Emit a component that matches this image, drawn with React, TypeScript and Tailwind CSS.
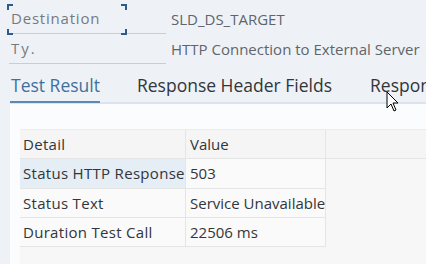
import React from "react";

const font = { fontFamily: '"Open Sans", "Noto Sans", sans-serif' };

function Corner({ pos }: { pos: string }) {
  return <span className={`absolute w-[6px] h-[6px] border-[#2f5b8a] ${pos}`} />;
}

export default function App() {
  return (
    <div className="w-[426px] h-[264px] overflow-hidden bg-[#eef2f7] relative" style={font}>
      <div className="pl-[9px] pt-[4px]">
        <div className="flex items-end h-[30px]">
          <div className="relative w-[157px] h-[30px] border-b border-[#c9ced4] flex items-center">
            <div className="absolute left-[-2px] top-0 w-[120px] h-[31px]">
              <Corner pos="left-0 top-0 border-l-2 border-t-2" />
              <Corner pos="right-0 top-0 border-r-2 border-t-2" />
              <Corner pos="left-0 bottom-0 border-l-2 border-b-2" />
              <Corner pos="right-0 bottom-0 border-r-2 border-b-2" />
            </div>
            <span className="pl-[2px] text-[15px] tracking-[0.8px] text-[#767a7e]">Destination</span>
          </div>
          <div className="pl-[5px] h-[30px] flex items-center text-[15px] text-[#5e656c]">SLD_DS_TARGET</div>
        </div>
        <div className="flex items-end h-[30px]">
          <div className="w-[157px] h-[30px] border-b border-[#c9ced4] flex items-center">
            <span className="pl-[2px] text-[15px] text-[#767a7e] tracking-[2px]">Ty.</span>
          </div>
          <div className="pl-[5px] h-[30px] flex items-center text-[15px] text-[#5e656c] whitespace-nowrap">
            HTTP Connection to External Server
          </div>
        </div>
      </div>
      <div className="ml-[10px] mt-[5px] flex h-[35px] border-b-2 border-[#dbe4ee] whitespace-nowrap">
        <div className="relative w-[91px] flex items-center text-[17.5px] text-[#41709c]">
          <span className="pl-[1px]">Test Result</span>
          <span className="absolute left-0 right-0 bottom-[-1px] h-[2px] bg-[#5d8ab4]" />
        </div>
        <div className="pl-[37px] flex items-center text-[17.5px] text-[#32363a]">Response Header Fields</div>
        <div className="pl-[38px] flex items-center text-[17.5px] text-[#32363a]">Response Body</div>
      </div>
      <div className="ml-[10px] h-[200px] bg-[#fbfcfd] pl-[10px] pt-[25px]">
        <div className="bg-[#f7f7f7] h-[200px] text-[15px] text-[#32363a]">
          <div className="grid grid-cols-[166px_140px_1fr] border-t border-[#ececec]">
            <div className="h-[29px] flex items-center pl-[3px] bg-[#f5f5f5] border-r border-b border-[#e5e5e5] tracking-[0.3px]">Detail</div>
            <div className="h-[29px] flex items-center pl-[4px] bg-[#f5f5f5] border-r border-b border-[#e5e5e5]">Value</div>
            <div className="h-[29px] bg-[#f5f5f5] border-b border-[#e5e5e5]" />
            <div className="h-[30px] flex items-center pl-[3px] bg-[#e5edf5] border-r border-b border-[#e5e5e5] whitespace-nowrap tracking-[0.3px]">Status HTTP Response</div>
            <div className="h-[30px] flex items-center pl-[4px] bg-[#fafafa] border-r border-b border-[#e5e5e5]">503</div>
            <div className="h-[30px]" />
            <div className="h-[29px] flex items-center pl-[3px] bg-[#fafafa] border-r border-b border-[#e5e5e5] tracking-[0.3px]">Status Text</div>
            <div className="h-[29px] flex items-center pl-[4px] bg-[#fafafa] border-r border-b border-[#e5e5e5] whitespace-nowrap">Service Unavailable</div>
            <div className="h-[29px]" />
            <div className="h-[29px] flex items-center pl-[3px] bg-[#fafafa] border-r border-b border-[#e5e5e5] tracking-[0.3px]">Duration Test Call</div>
            <div className="h-[29px] flex items-center pl-[4px] bg-[#fafafa] border-r border-b border-[#e5e5e5]">22506 ms</div>
            <div className="h-[29px]" />
          </div>
        </div>
      </div>
      <svg className="absolute left-[386px] top-[91px]" width="14" height="22" viewBox="0 0 14 22">
        <path d="M1 1 L1 17 L5 13 L8 20 L10 19 L7 12 L12 12 Z" fill="#fff" stroke="#000" strokeWidth="1" strokeLinejoin="round" />
      </svg>
    </div>
  );
}
